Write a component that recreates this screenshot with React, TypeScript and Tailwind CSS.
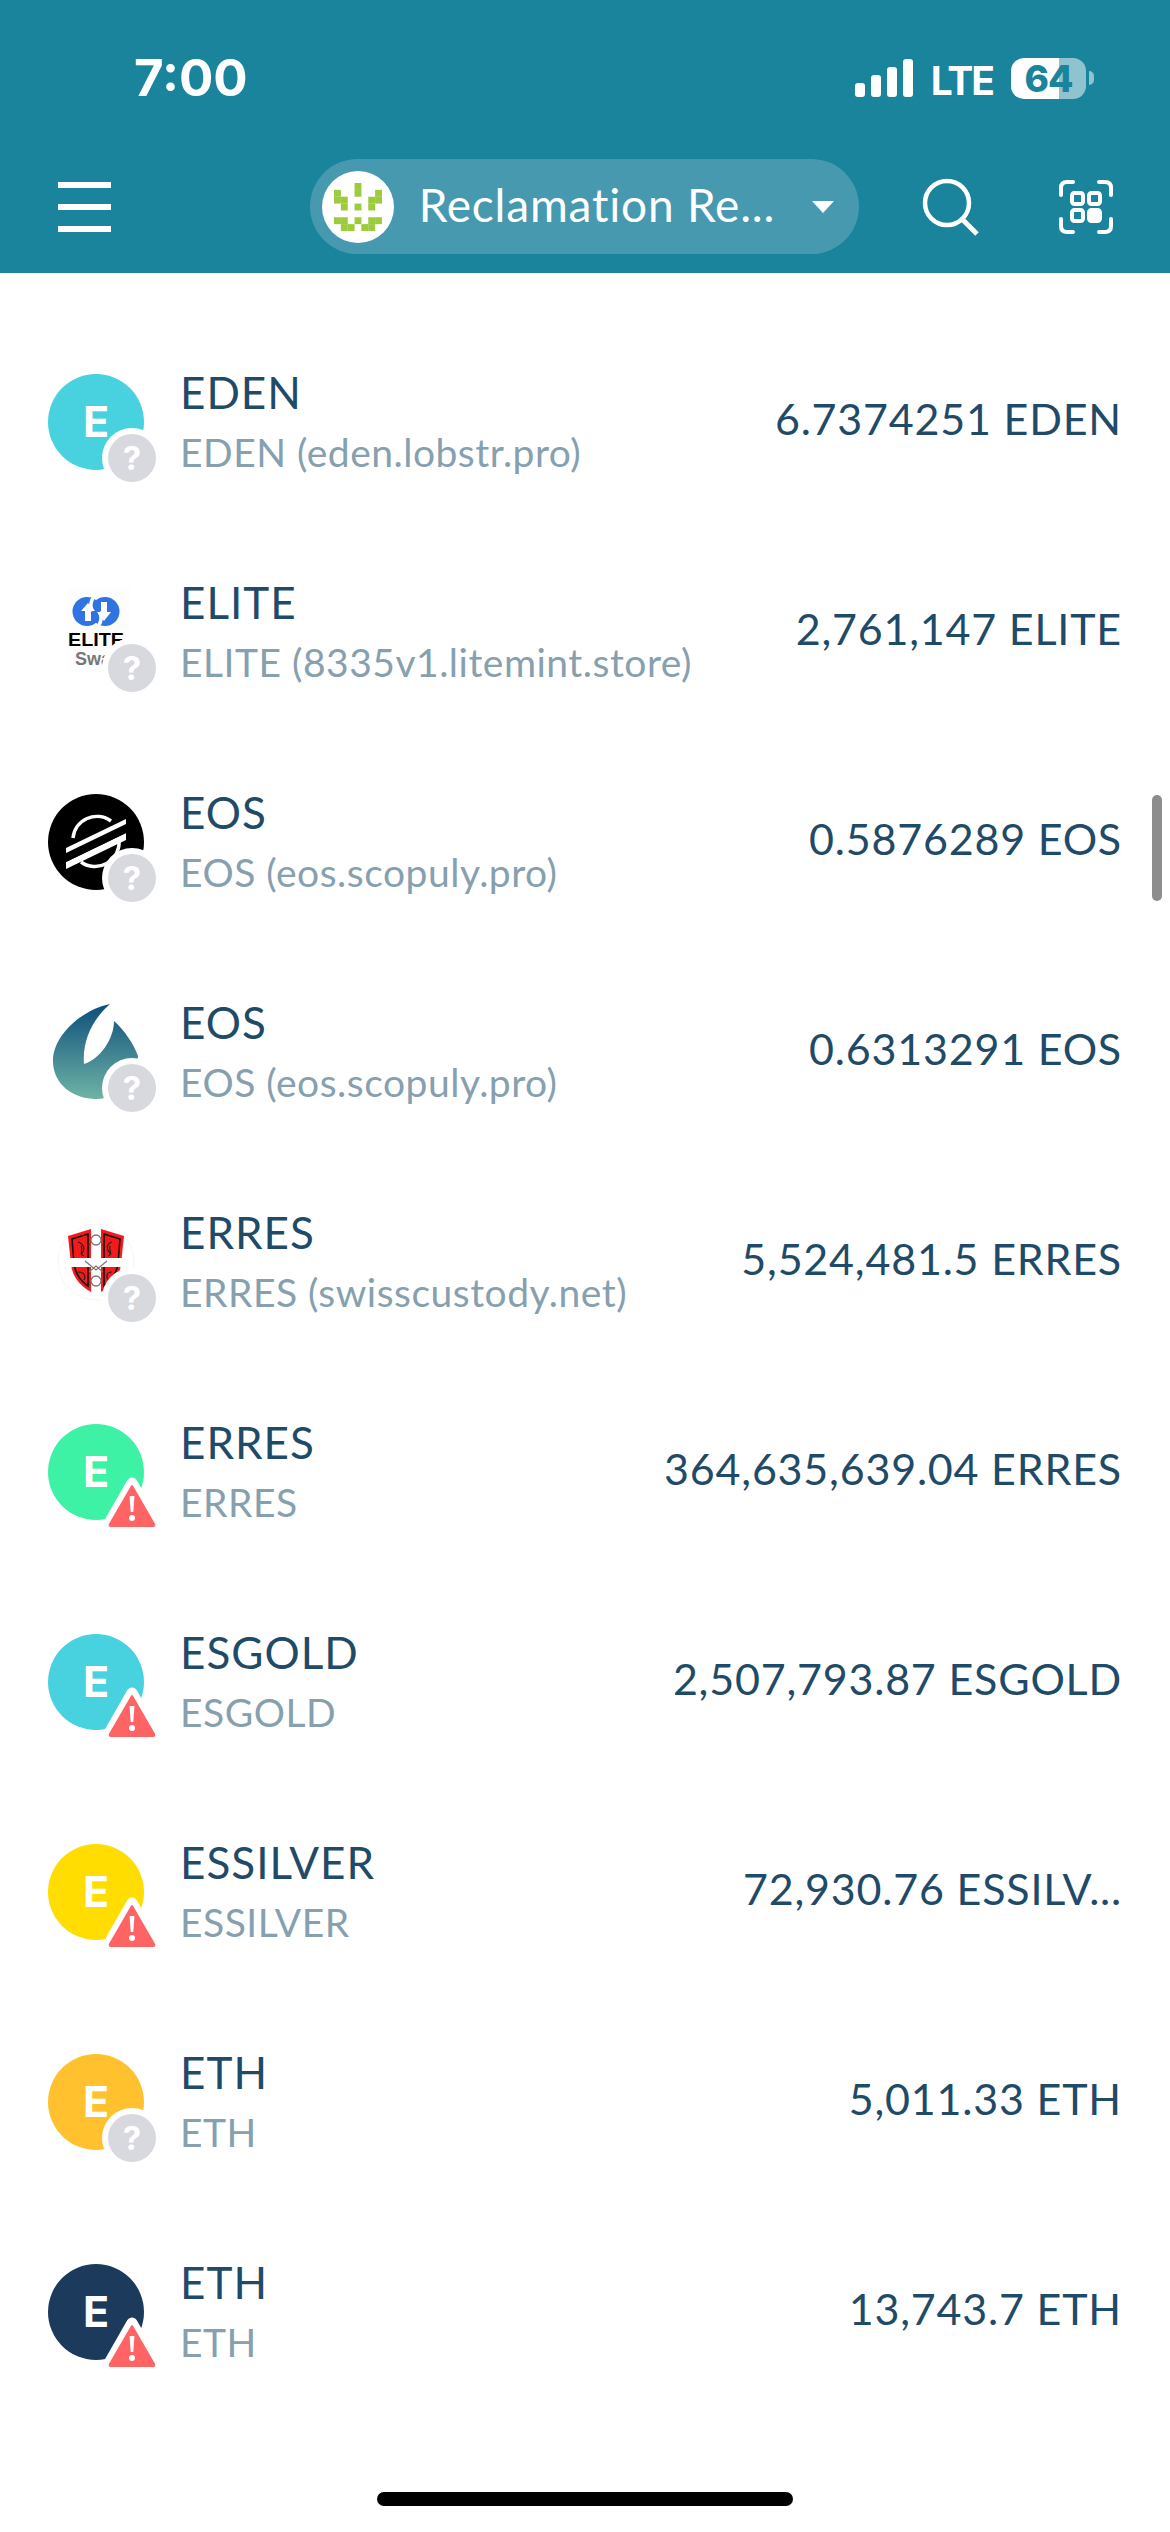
import React from "react";

const FONT = "font-['Lato','Noto_Sans',sans-serif]";

function PixelLogo() {
  const cells: [number, number][] = [
    [3, 0], [0, 1], [3, 1], [6, 1], [0, 2], [1, 2], [5, 2], [6, 2], [1, 3], [3, 3], [5, 3],
    [0, 5], [1, 5], [3, 5], [5, 5], [6, 5], [1, 6], [2, 6], [4, 6], [5, 6],
  ];
  return (
    <svg width="72" height="72" viewBox="0 0 72 72" className="shrink-0">
      <circle cx="36" cy="36" r="36" fill="#fff" />
      {cells.map(([c, r]) => (
        <rect key={`${c}-${r}`} x={12 + c * 6.85} y={12 + r * 6.85} width="6.9" height="6.9" fill="#9ccc3c" />
      ))}
    </svg>
  );
}

function SignalIcon() {
  return (
    <svg width="58" height="38" viewBox="0 0 58 38" className="shrink-0">
      <rect x="0" y="24" width="10" height="14" rx="3" fill="#fff" />
      <rect x="16" y="16" width="10" height="22" rx="3" fill="#fff" />
      <rect x="32" y="8" width="10" height="30" rx="3" fill="#fff" />
      <rect x="48" y="0" width="10" height="38" rx="3" fill="#fff" />
    </svg>
  );
}

function Battery() {
  return (
    <div className="flex h-[41px] w-[75px] shrink-0 items-center justify-center rounded-[13px] bg-[linear-gradient(90deg,#ffffff_64%,#8fc3d0_64%)]">
      <span className="font-['Inter',sans-serif] text-[37px] font-extrabold leading-none tracking-[-1px] text-[#19849c]">64</span>
    </div>
  );
}

function SearchIcon() {
  return (
    <svg width="60" height="60" viewBox="0 0 60 60" fill="none" stroke="#fff" strokeWidth="4.5">
      <circle cx="27" cy="26" r="22" />
      <path d="M42 42 L57 57" strokeWidth="5" />
    </svg>
  );
}

function ScanIcon() {
  return (
    <svg width="54" height="54" viewBox="0 0 54 54" fill="none" stroke="#fff" strokeWidth="4" strokeLinecap="round">
      <path d="M2 15 V8 Q2 2 8 2 H14" />
      <path d="M40 2 H46 Q52 2 52 8 V15" />
      <path d="M2 39 V46 Q2 52 8 52 H14" />
      <path d="M40 52 H46 Q52 52 52 46 V39" />
      <rect x="13" y="13" width="11" height="11" rx="2.5" />
      <rect x="30" y="13" width="11" height="11" rx="2.5" />
      <rect x="13" y="30" width="11" height="11" rx="2.5" />
      <rect x="30" y="30" width="11" height="11" rx="2.5" fill="#fff" />
    </svg>
  );
}

function LetterCircle({ color }: { color: string }) {
  return (
    <div
      className="flex h-[96px] w-[96px] items-center justify-center rounded-full pb-[2px] font-['Inter',sans-serif] text-[43px] font-bold leading-none text-white"
      style={{ backgroundColor: color }}
    >
      E
    </div>
  );
}

function EliteLogo() {
  return (
    <svg width="96" height="96" viewBox="0 0 96 96">
      <rect x="20" y="4" width="62" height="84" fill="#fdfdfd" />
      <circle cx="39" cy="27.5" r="14.5" fill="#2f74e0" />
      <circle cx="57" cy="27.5" r="14.5" fill="#2f74e0" />
      <path d="M48 13 C44 18 44 22 46 26 L43 28 C40 22 41 16 44 13 Z" fill="#fff" />
      <path d="M48 42 C52 37 52 33 50 29 L53 27 C56 33 55 39 52 42 Z" fill="#fff" />
      <path d="M40 19 L47 27 L43 27 L43 37 L37 37 L37 27 L33 27 Z" fill="#fff" />
      <path d="M53 18 L59 18 L59 28 L63 28 L56 37 L49 28 L53 28 Z" fill="#fff" />
      <text x="20" y="62" fontFamily="Liberation Sans, sans-serif" fontWeight="700" fontSize="18" fill="#000" textLength="56" lengthAdjust="spacingAndGlyphs">ELITE</text>
      <text x="27" y="81" fontFamily="Liberation Sans, sans-serif" fontWeight="700" fontSize="18" fill="#777">Swap</text>
    </svg>
  );
}

function StellarLogo() {
  return (
    <svg width="96" height="96" viewBox="0 0 96 96">
      <circle cx="48" cy="48" r="48" fill="#000" />
      <g fill="none" stroke="#fff" strokeWidth="3.5">
        <path d="M25 44 A24 24 0 0 1 63 27" />
        <path d="M71 47 A24 24 0 0 1 33 68" />
      </g>
      <path d="M18 54 L78 25 L78 33 L18 62 Z" fill="#fff" />
      <path d="M18 68 L78 39 L78 46 L18 75 Z" fill="#fff" />
      <path d="M18 59 L78 30 L78 39 L18 68 Z" fill="#000" />
    </svg>
  );
}

function DropLogo() {
  return (
    <svg width="96" height="96" viewBox="0 0 96 96">
      <defs>
        <linearGradient id="dropGrad" x1="0" y1="0" x2="0" y2="1">
          <stop offset="0" stopColor="#0d4f7a" />
          <stop offset="1" stopColor="#6fb3a6" />
        </linearGradient>
      </defs>
      <path
        d="M62 0 C36 5 5 30 5 57 C5 80 25 95 48 95 C75 95 90 75 90 52 C86 40 76 26 66 17 C66 35 52 55 36 60 C34 35 46 14 62 0 Z"
        fill="url(#dropGrad)"
      />
    </svg>
  );
}

function ShieldLogo() {
  return (
    <svg width="96" height="96" viewBox="0 0 96 96">
      <circle cx="48" cy="48" r="38" fill="#fff" stroke="#f6f6f6" strokeWidth="1" />
      <path d="M20 22 L43 15 L43 78 C32 72 24 62 23 50 Z" fill="#f41a1a" />
      <path d="M53 15 L76 22 L73 50 C72 62 64 72 53 78 Z" fill="#f41a1a" />
      <g fill="none" stroke="#111" strokeWidth="1.6">
        <path d="M24 25 L40 20 L40 72 C31 66 27 58 26 49 Z" />
        <path d="M56 20 L72 25 L70 49 C69 58 65 66 56 72 Z" />
      </g>
      <g fill="none" stroke="#222" strokeWidth="1.2">
        <path d="M30 28 C36 30 38 36 33 40 M33 32 C36 36 30 40 36 42" />
        <path d="M64 28 C58 30 58 36 63 40 M62 32 C60 36 66 40 60 42" />
        <path d="M30 58 C36 58 38 62 36 66 M64 58 C58 58 58 62 60 66" />
      </g>
      <rect x="20" y="44" width="56" height="9" fill="#fff" />
      <g fill="none" stroke="#777" strokeWidth="1.3">
        <circle cx="48" cy="26" r="5" />
        <path d="M37 47 L48 56 L59 47 M41 58 L48 52 L55 58" />
        <circle cx="48" cy="67" r="5" />
      </g>
    </svg>
  );
}

function QuestionBadge() {
  return (
    <div className="absolute left-[54px] top-[54px] flex h-[60px] w-[60px] items-center justify-center rounded-full bg-white">
      <div className="flex h-[48px] w-[48px] items-center justify-center rounded-full bg-[#d8d9df] font-['Inter',sans-serif] text-[33px] font-bold leading-none text-white">
        ?
      </div>
    </div>
  );
}

function WarningBadge() {
  return (
    <svg className="absolute left-[54px] top-[52px]" width="60" height="54" viewBox="0 0 60 54">
      <path
        d="M30 7 L54 49 L6 49 Z"
        fill="#ff6464"
        stroke="#fff"
        strokeWidth="11"
        strokeLinejoin="round"
      />
      <path d="M30 10 L52 48 Q53 50 51 50 L9 50 Q7 50 8 48 Z" fill="#ff6464" stroke="#ff6464" strokeWidth="2" strokeLinejoin="round" />
      <path d="M27.6 20 H32.4 L31.3 36 H28.7 Z" fill="#fff" />
      <circle cx="30" cy="42" r="3" fill="#fff" />
    </svg>
  );
}

type Row = {
  icon: React.ReactNode;
  badge: "q" | "w";
  title: string;
  sub: string;
  amount: string;
};

const rows: Row[] = [
  { icon: <LetterCircle color="#48d1de" />, badge: "q", title: "EDEN", sub: "EDEN (eden.lobstr.pro)", amount: "6.7374251 EDEN" },
  { icon: <EliteLogo />, badge: "q", title: "ELITE", sub: "ELITE (8335v1.litemint.store)", amount: "2,761,147 ELITE" },
  { icon: <StellarLogo />, badge: "q", title: "EOS", sub: "EOS (eos.scopuly.pro)", amount: "0.5876289 EOS" },
  { icon: <DropLogo />, badge: "q", title: "EOS", sub: "EOS (eos.scopuly.pro)", amount: "0.6313291 EOS" },
  { icon: <ShieldLogo />, badge: "q", title: "ERRES", sub: "ERRES (swisscustody.net)", amount: "5,524,481.5 ERRES" },
  { icon: <LetterCircle color="#3df2a4" />, badge: "w", title: "ERRES", sub: "ERRES", amount: "364,635,639.04 ERRES" },
  { icon: <LetterCircle color="#48d1de" />, badge: "w", title: "ESGOLD", sub: "ESGOLD", amount: "2,507,793.87 ESGOLD" },
  { icon: <LetterCircle color="#ffdd00" />, badge: "w", title: "ESSILVER", sub: "ESSILVER", amount: "72,930.76 ESSILV..." },
  { icon: <LetterCircle color="#ffc12e" />, badge: "q", title: "ETH", sub: "ETH", amount: "5,011.33 ETH" },
  { icon: <LetterCircle color="#1c3a5c" />, badge: "w", title: "ETH", sub: "ETH", amount: "13,743.7 ETH" },
];

function AssetRow({ row }: { row: Row }) {
  return (
    <div className="flex h-[210px] items-center pl-[48px] pr-[48px]">
      <div className="relative h-[96px] w-[96px] shrink-0">
        {row.icon}
        {row.badge === "q" ? <QuestionBadge /> : <WarningBadge />}
      </div>
      <div className="ml-[36px] flex min-w-0 flex-col">
        <div className="text-[44px] leading-[60px] tracking-[1px] text-[#1f4a68]">{row.title}</div>
        <div className="text-[39px] leading-[60px] tracking-[0.5px] text-[#86a0b0]">{row.sub}</div>
      </div>
      <div className="mb-[6px] ml-auto whitespace-nowrap text-[43px] leading-[60px] tracking-[0.8px] text-[#1f4a68]">{row.amount}</div>
    </div>
  );
}

export default function App() {
  return (
    <div className={`relative flex h-[2532px] w-[1170px] flex-col overflow-hidden bg-white ${FONT}`}>
      <header className="h-[273px] shrink-0 bg-[#19849c] text-white">
        <div className="flex h-[159px] items-start pl-[134px] pr-[76px] pt-[54px]">
          <span className="font-['Inter',sans-serif] text-[51px] font-bold leading-[48px]">7:00</span>
          <div className="ml-auto flex items-center">
            <SignalIcon />
            <span className="ml-[18px] pt-[6px] font-['Inter',sans-serif] text-[39px] font-bold leading-[42px] tracking-[-2px]">LTE</span>
            <div className="ml-[18px]"><Battery /></div>
            <div className="ml-[3px] h-[14px] w-[5px] rounded-r-full bg-[#8fc3d0]" />
          </div>
        </div>
        <div className="flex items-center pl-[58px] pr-[57px]">
          <div className="flex w-[53px] flex-col gap-[16px]">
            <div className="h-[6px] bg-white" />
            <div className="h-[6px] bg-white" />
            <div className="h-[6px] bg-white" />
          </div>
          <div className="ml-[199px] flex h-[95px] w-[553px] items-center rounded-[48px] bg-[#4799af] pl-[12px]">
            <PixelLogo />
            <span className="mb-[4px] ml-[25px] whitespace-nowrap text-[46px] leading-none tracking-[0.8px]">Reclamation Re...</span>
            <svg className="ml-auto mr-[25px]" width="22" height="12" viewBox="0 0 22 12">
              <path d="M0 0 H22 L11 12 Z" fill="#fff" />
            </svg>
          </div>
          <div className="ml-[61px]"><SearchIcon /></div>
          <div className="ml-[79px]"><ScanIcon /></div>
        </div>
      </header>
      <main className="flex-1 pt-[44px]">
        {rows.map((row, i) => (
          <AssetRow key={i} row={row} />
        ))}
      </main>
      <div className="flex justify-center pb-[26px]">
        <div className="h-[14px] w-[416px] rounded-full bg-black" />
      </div>
      <div className="absolute right-[8px] top-[795px] h-[106px] w-[10px] rounded-full bg-[#8d8d8d]" />
    </div>
  );
}
